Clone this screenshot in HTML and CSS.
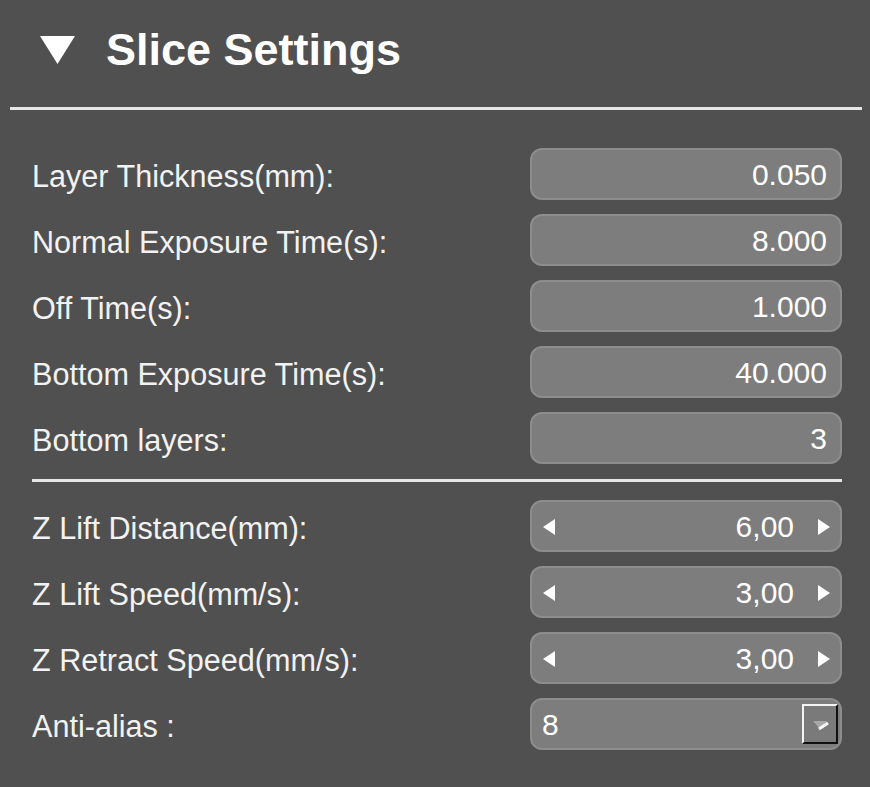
FILE: index.html
```html
<!DOCTYPE html>
<html lang="en">
<head>
    <meta charset="UTF-8">
    <title>Slice Settings</title>
    <link rel="stylesheet" href="styles.css">
</head>
<body>
    <div class="panel">
        <div class="head">
            <svg class="tri" width="35" height="28" viewBox="0 0 35 28"><polygon points="0,0 35,0 17.5,28" fill="#fff"/></svg>
            <h1>Slice Settings</h1>
        </div>
        <div class="rule"></div>

        <div class="group">
            <div class="row">
                <label>Layer Thickness(mm):</label>
                <div class="field">0.050</div>
            </div>
            <div class="row">
                <label>Normal Exposure Time(s):</label>
                <div class="field">8.000</div>
            </div>
            <div class="row">
                <label>Off Time(s):</label>
                <div class="field">1.000</div>
            </div>
            <div class="row">
                <label>Bottom Exposure Time(s):</label>
                <div class="field">40.000</div>
            </div>
            <div class="row">
                <label>Bottom layers:</label>
                <div class="field">3</div>
            </div>
        </div>

        <div class="sep"></div>

        <div class="group">
            <div class="row">
                <label>Z Lift Distance(mm):</label>
                <div class="field spin">
                    <span class="arr left"></span>
                    <span class="val">6,00</span>
                    <span class="arr right"></span>
                </div>
            </div>
            <div class="row">
                <label>Z Lift Speed(mm/s):</label>
                <div class="field spin">
                    <span class="arr left"></span>
                    <span class="val">3,00</span>
                    <span class="arr right"></span>
                </div>
            </div>
            <div class="row">
                <label>Z Retract Speed(mm/s):</label>
                <div class="field spin">
                    <span class="arr left"></span>
                    <span class="val">3,00</span>
                    <span class="arr right"></span>
                </div>
            </div>
            <div class="row">
                <label>Anti-alias :</label>
                <div class="field combo">
                    <span class="val">8</span>
                    <span class="drop">
                        <svg width="32" height="36" viewBox="0 0 32 36">
                            <polygon points="9,15 23,15 16,23" fill="#a8a8a8"/>
                            <line x1="15" y1="23" x2="24" y2="17" stroke="#fff" stroke-width="3"/>
                        </svg>
                    </span>
                </div>
            </div>
        </div>
    </div>
</body>
</html>
```

FILE: styles.css
```css
*{margin:0; padding:0; box-sizing:border-box;}
body{
    background: #505050;
    font-family: "Liberation Sans", Arial, sans-serif;
    color: #f2f2f2;
}
.panel{
    width: 870px;
    height: 787px;
    padding-top: 20px;
}
.head{
    display: flex;
    align-items: center;
    height: 60px;
    padding-left: 40px;
}
.head .tri{
    margin-right: 31px;
}
.head h1{
    font-size: 45px;
    line-height: 60px;
    font-weight: bold;
    color: #fff;
}
.rule{
    height: 3px;
    margin: 27px 8px 0 10px;
    background: #e6e6e6;
}
.group{
    display: flex;
    flex-direction: column;
    gap: 14px;
    padding: 0 28px 0 32px;
}
.rule + .group{
    margin-top: 38px;
}
.sep{
    height: 3px;
    margin: 15px 28px 18px 32px;
    background: #e6e6e6;
}
.row{
    display: flex;
    align-items: center;
    justify-content: space-between;
    height: 52px;
}
.row label{
    font-size: 30.6px;
    padding-top: 4px;
    color: #f2f2f2;
}
.field{
    width: 312px;
    height: 52px;
    border: 2px solid #8d8d8d;
    border-radius: 12px;
    background: #7d7d7d;
    display: flex;
    align-items: center;
    justify-content: flex-end;
    padding: 2px 13px 0 0;
    font-size: 30px;
    color: #fff;
}
.spin{
    padding: 2px 10px 0 11px;
}
.spin .val{
    margin-left: auto;
    margin-right: 24px;
}
.arr{
    width: 0;
    height: 0;
    border-top: 8px solid transparent;
    border-bottom: 8px solid transparent;
}
.arr.left{
    border-right: 12px solid #fff;
}
.arr.right{
    border-left: 12px solid #fff;
}
.combo{
    justify-content: space-between;
    padding: 0 2px 0 10px;
}
.combo .val{
    padding-top: 2px;
}
.drop{
    width: 36px;
    height: 40px;
    border-top: 2px solid #f4f4f4;
    border-left: 2px solid #f4f4f4;
    border-right: 2px solid #111;
    border-bottom: 2px solid #111;
    background: #7a7a7a;
    display: flex;
}
```
